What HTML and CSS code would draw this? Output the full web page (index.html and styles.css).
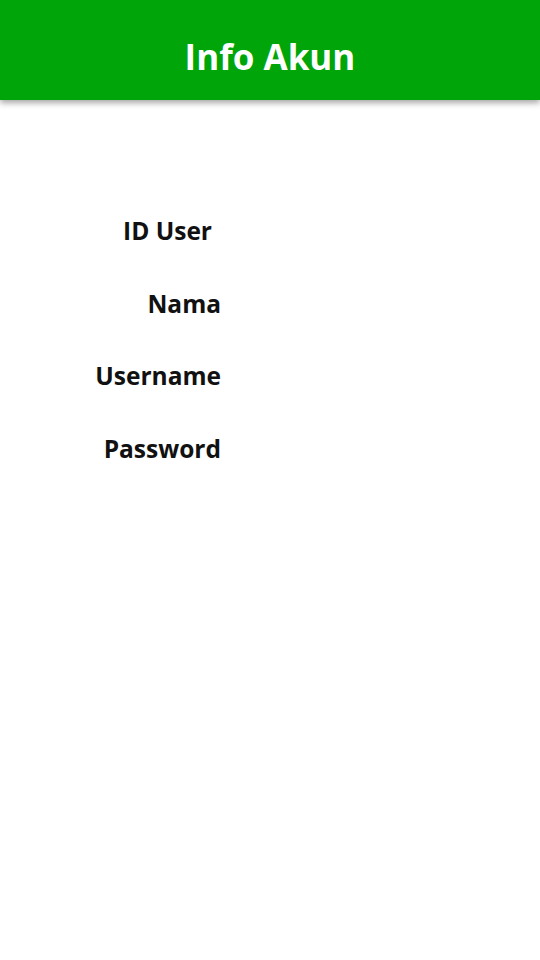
FILE: index.html
```html
<!DOCTYPE html>
<html lang="id">
<head>
<meta charset="utf-8">
<title>Info Akun</title>
<link rel="stylesheet" href="styles.css">
</head>
<body>
<header class="appbar">
  <h1 class="appbar-title">Info Akun</h1>
</header>
<main class="info">
  <div class="label label-id">ID User</div>
  <div class="label">Nama</div>
  <div class="label">Username</div>
  <div class="label">Password</div>
</main>
</body>
</html>
```

FILE: styles.css
```css
html, body {
  margin: 0;
  padding: 0;
  background: #ffffff;
}
body {
  width: 540px;
  min-height: 960px;
  font-family: "Open Sans", "Noto Sans", "Liberation Sans", sans-serif;
  color: #111111;
}
.appbar {
  height: 100px;
  background: #00a50a;
  display: flex;
  align-items: center;
  justify-content: center;
  box-shadow: 0 3px 6px rgba(0, 0, 0, 0.35);
  position: relative;
}
.appbar-title {
  margin: 0;
  color: #ffffff;
  font-size: 35px;
  font-weight: 700;
  letter-spacing: 0;
  padding-top: 12px;
}
.info {
  width: 221px;
  display: flex;
  flex-direction: column;
  align-items: flex-end;
  padding-top: 114px;
  gap: 39.5px;
}
.label {
  font-size: 24.5px;
  font-weight: 700;
  line-height: 33px;
}
.label-id {
  padding-right: 9px;
}
```
